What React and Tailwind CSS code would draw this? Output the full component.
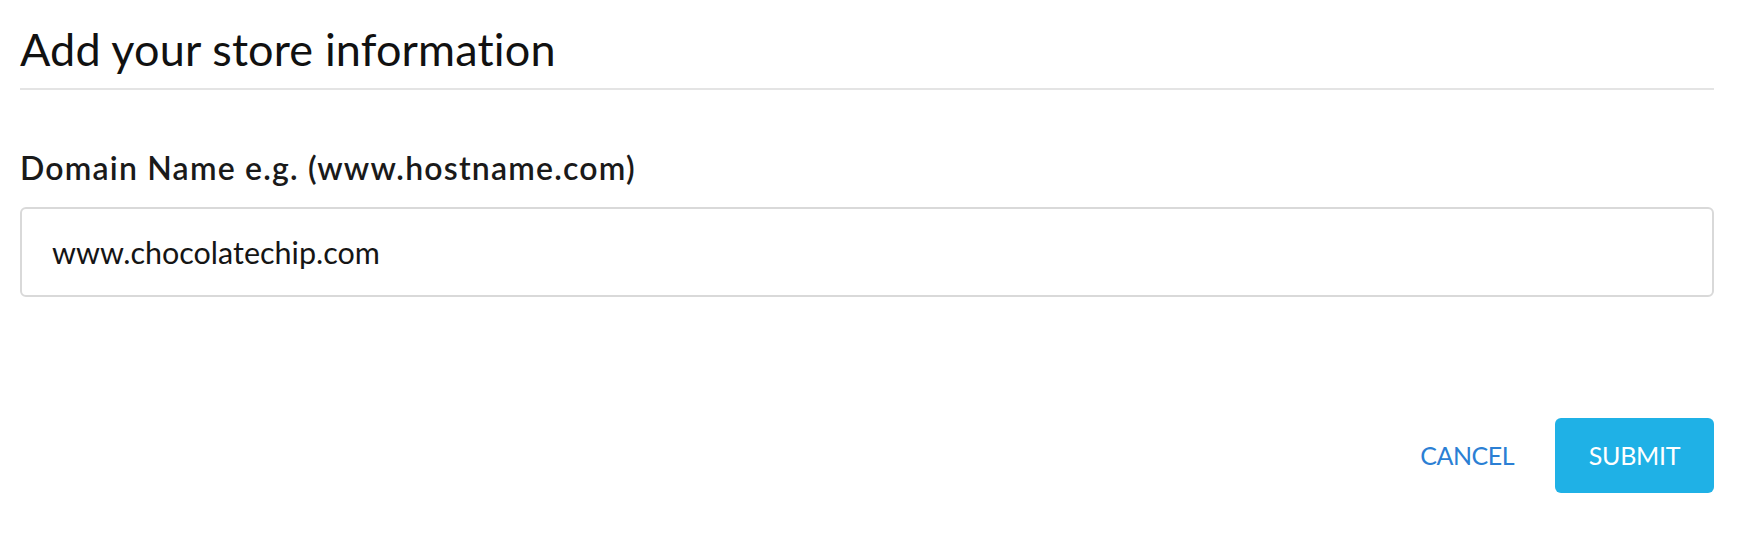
import React from 'react';

const font = { fontFamily: 'Lato, "Noto Sans", sans-serif' };

const App = () => {
    return (
        <div className="w-[1754px] h-[556px] bg-white pl-[20px] pr-[40px]" style={font}>
            {/* Header */}
            <div className="pt-[22px] pb-[12px] border-b-2 border-[#e4e4e4]">
                <h1 className="text-[45px] leading-[54px] font-normal tracking-[0.15px] text-[#111111]">
                    Add your store information
                </h1>
            </div>

            {/* Field */}
            <div className="mt-[59px]">
                <label className="block text-[32px] leading-[38px] font-semibold tracking-[1.2px] text-[#1a1a1a]">
                    Domain Name e.g. (www.hostname.com)
                </label>
                <input
                    type="text"
                    defaultValue="www.chocolatechip.com"
                    className="mt-[20px] block w-full h-[90px] px-[30px] border-2 border-[#d9d9d9] rounded-[6px] text-[30.5px] text-[#151515] outline-none bg-white"
                />
            </div>

            {/* Actions */}
            <div className="mt-[121px] flex justify-end items-center gap-[41px]">
                <button className="text-[25px] leading-none text-[#2b7fd4] font-normal uppercase tracking-[-0.5px]">
                    Cancel
                </button>
                <button className="w-[159px] h-[75px] rounded-[6px] bg-[#1fb1e6] text-white text-[25px] leading-none font-normal uppercase tracking-[-0.3px] flex items-center justify-center">
                    Submit
                </button>
            </div>
        </div>
    );
};

export default App;
